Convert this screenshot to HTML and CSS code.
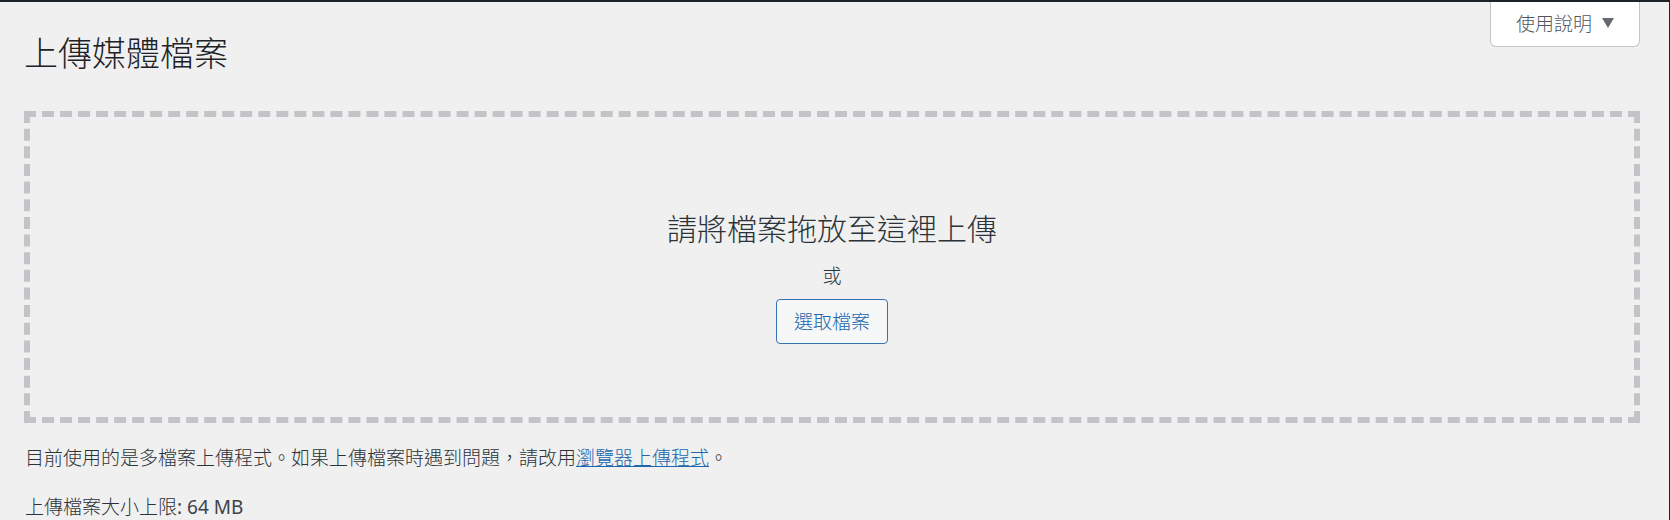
FILE: index.html
```html
<!DOCTYPE html>
<html lang="zh-TW">
<head>
<meta charset="utf-8">
<title>上傳媒體檔案</title>
<link rel="stylesheet" href="styles.css">
</head>
<body>
<main class="page">
  <header class="page-header">
    <h1 class="page-title">上傳媒體檔案</h1>
    <button class="help-tab" type="button" aria-expanded="false">使用說明
      <svg class="help-arrow" viewBox="0 0 12 10" aria-hidden="true"><path d="M0 0h12L6 10z"/></svg>
    </button>
  </header>
  <section class="drop-area">
    <p class="drop-title">請將檔案拖放至這裡上傳</p>
    <p class="drop-or">或</p>
    <button class="select-button" type="button">選取檔案</button>
  </section>
  <p class="note">目前使用的是多檔案上傳程式。如果上傳檔案時遇到問題，請改用<a class="link" href="#browser-uploader">瀏覽器上傳程式</a>。</p>
  <p class="note">上傳檔案大小上限<span class="limit">: 64 MB</span></p>
</main>
</body>
</html>
```
FILE: styles.css
```css
* {
  box-sizing: border-box;
}

html {
  background: #f0f0f1;
}

body {
  margin: 0;
  min-height: 100vh;
  overflow: hidden;
  border-top: 2px solid #1d2327;
  border-right: 1px solid #1d2327;
  background: #f0f0f0;
  color: #2c3338;
  font-family: "Noto Sans CJK TC", "Noto Sans", sans-serif;
  font-size: 19px;
  font-weight: 300;
  line-height: 30px;
}

.page {
  padding: 0 29px 0 24px;
}

.page-header {
  display: flex;
  justify-content: space-between;
  align-items: flex-start;
}

.page-title {
  margin: 28px 0 37px;
  color: #1d2327;
  font-size: 34px;
  font-weight: 300;
  line-height: 44px;
}

.help-tab {
  display: flex;
  align-items: center;
  gap: 10px;
  height: 45px;
  padding: 0 25px 3px;
  border: 1px solid #c3c4c7;
  border-top: 0;
  border-radius: 0 0 6px 6px;
  background: #fff;
  color: #50575e;
  font: inherit;
}

.help-arrow {
  width: 12px;
  height: 10px;
  fill: #646970;
}

.drop-area {
  display: flex;
  flex-direction: column;
  align-items: center;
  height: 312px;
  padding-top: 88px;
  border: 6px dashed #c3c4c7;
}

.drop-title {
  margin: 0;
  font-size: 30px;
  line-height: 44px;
}

.drop-or {
  margin: 11px 0 9px;
}

.select-button {
  height: 45px;
  padding: 0 17px 2px;
  border: 1px solid #3671b1;
  border-radius: 4px;
  background: #f6f7f7;
  color: #2166ad;
  font: inherit;
}

.note {
  margin: 19px 0;
  padding-left: 1px;
}

.limit {
  color: #3c434a;
  font-family: "Noto Sans", sans-serif;
  font-weight: 400;
}

.link {
  color: #2166ad;
}
```
